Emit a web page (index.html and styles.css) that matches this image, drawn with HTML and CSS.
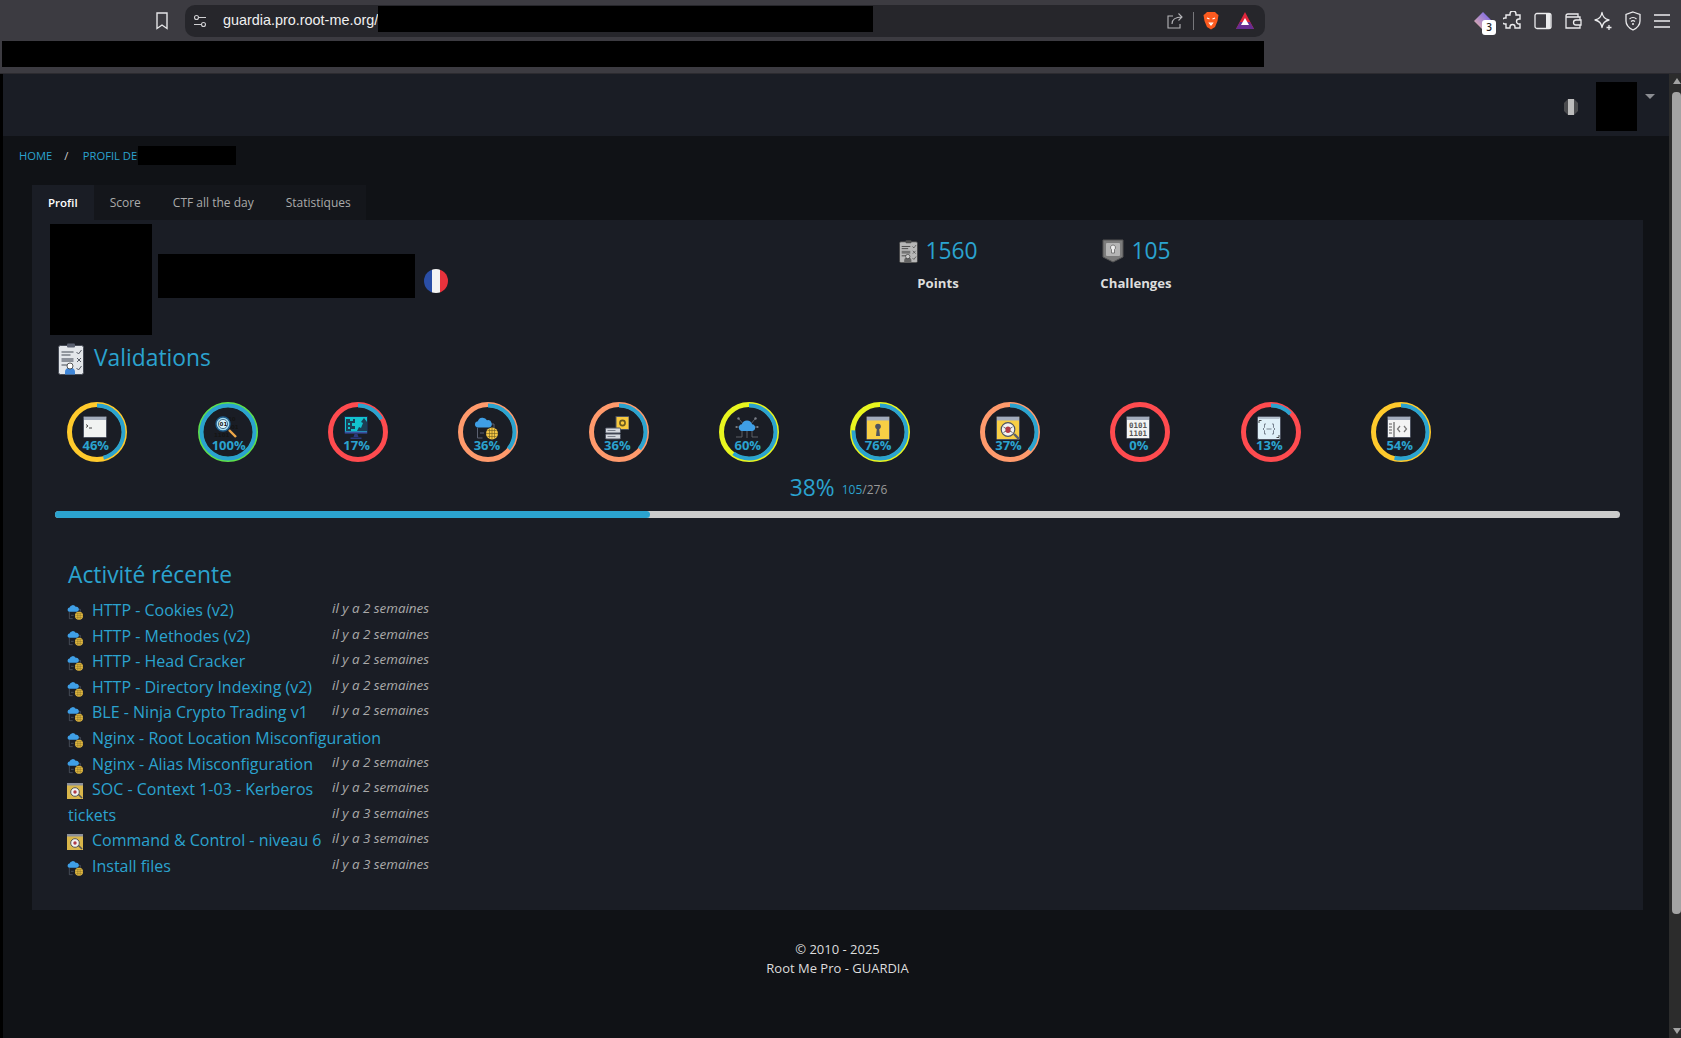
FILE: index.html
```html
<!DOCTYPE html>
<html lang="fr">
<head>
    <meta charset="UTF-8">
    <meta name="viewport" content="width=device-width, initial-scale=1.0">
    <title>Profil - Root Me Pro</title>
    <link rel="stylesheet" href="styles.css">
</head>
<body>
    <svg class="defs" width="0" height="0">
        <symbol id="i-terminal" viewBox="0 0 24 24">
            <rect x="0.500" y="0.500" width="23" height="21" rx="1" fill="#f1f3f2" stroke="#4d5360"/>
            <rect x="1" y="1" width="22" height="3" fill="#a3acbc"/>
            <path d="M3 8.500l2 1.500-2 1.500M6 12h3" fill="none" stroke="#333" stroke-width="0.900"/>
        </symbol>
        <symbol id="i-monitor" viewBox="0 0 24 24">
            <rect x="0.500" y="0.500" width="23" height="16.500" fill="#12c3cf" stroke="#1b2a4a"/>
            <path d="M2 3h4v2h3V3h2v4H8v3h3v3H7v2H2zM13 15l2-4 2 1 2-5-2-1 3-4 3 4v9z" fill="#1c3f55"/>
            <path d="M4 7h2v2H4zM4 11h2v2H4z" fill="#12c3cf"/>
            <rect x="1" y="15.500" width="22" height="2" fill="#3b4f9e"/>
            <path d="M10.500 18h3l1 3h-5zM6.500 21.500h11v1.500h-11z" fill="#2b3a80"/>
        </symbol>
        <symbol id="i-network" viewBox="0 0 24 24">
            <path d="M3.500 12v10h5M15 8h5v5M6 17h4" fill="none" stroke="#5a6070" stroke-width="1"/>
            <path d="M3 11.500a3.200 3.200 0 0 1 .8-6.200A5 5 0 0 1 13 4.300a3.600 3.600 0 0 1 2 7.200z" fill="#3f9fe6"/>
            <circle cx="18" cy="17.500" r="6" fill="#f3c544"/>
            <path d="M12 17.500h12M18 11.500v12M13.500 14.500h9M13.500 20.500h9M15.500 12.500v10M20.500 12.500v10" stroke="#6b5a20" stroke-width="0.600"/>
        </symbol>
        <symbol id="i-server" viewBox="0 0 24 24">
            <rect x="11" y="0.500" width="13" height="13" fill="#f8c93e" stroke="#4d5360"/>
            <circle cx="17.500" cy="7" r="2.600" fill="none" stroke="#6b5a20" stroke-width="1.600"/>
            <rect x="0.500" y="12" width="15" height="5" rx="1" fill="#d5d9df" stroke="#4d5360"/>
            <rect x="0.500" y="18" width="15" height="5" rx="1" fill="#d5d9df" stroke="#4d5360"/>
            <path d="M2.500 14.500h8M2.500 20.500h8" stroke="#7b818d"/>
        </symbol>
        <symbol id="i-cloud" viewBox="0 0 24 24">
            <path d="M4 3l5 6M20 3l-5 6M1 11h4M23 11h-4M1 21h6M23 21h-6M12 15v7M7 14v7M17 14v7" fill="none" stroke="#63666e" stroke-width="0.900"/>
            <circle cx="3.500" cy="2.500" r="1.200" fill="#7b7f88"/>
            <circle cx="20.500" cy="2.500" r="1.200" fill="#7b7f88"/>
            <circle cx="1.500" cy="11" r="1.100" fill="#7b7f88"/>
            <circle cx="22.500" cy="11" r="1.100" fill="#7b7f88"/>
            <path d="M6.500 15a3.400 3.400 0 0 1 .4-6.700 5.300 5.300 0 0 1 10.200 0 3.400 3.400 0 0 1 .4 6.700z" fill="#3f9fe6"/>
        </symbol>
        <symbol id="i-key" viewBox="0 0 24 24">
            <rect x="0.500" y="0.500" width="23" height="23" rx="1" fill="#f8cf45" stroke="#4d5360"/>
            <rect x="1" y="1" width="22" height="3.500" fill="#a3acbc"/>
            <circle cx="12" cy="10.500" r="2.800" fill="#4d5360"/>
            <path d="M11 11h2l1 9h-4z" fill="#4d5360"/>
        </symbol>
        <symbol id="i-bug" viewBox="0 0 24 24">
            <rect x="0.500" y="0.500" width="23" height="23" rx="1" fill="#f8cf45" stroke="#4d5360"/>
            <rect x="1" y="1" width="22" height="3.500" fill="#a3acbc"/>
            <path d="M18 18l5 5" stroke="#5a5f6a" stroke-width="2.400"/>
            <circle cx="12" cy="13.500" r="6.800" fill="#f2f2f2" stroke="#4d5360" stroke-width="1.200"/>
            <ellipse cx="12" cy="13.800" rx="2.600" ry="3.200" fill="#b23b46"/>
            <path d="M7.500 11l2.500 1.500M16.500 11L14 12.500M7.500 16.500l2.500-1.500M16.500 16.500L14 15" stroke="#333" stroke-width="0.700"/>
        </symbol>
        <symbol id="i-brace" viewBox="0 0 24 24">
            <rect x="0.500" y="0.500" width="23" height="23" rx="1.500" fill="#dff0f8" stroke="#4d5360"/>
            <path d="M1.500 2h21" stroke="#a3acbc" stroke-width="1.400"/>
            <path d="M9 8H7.500v3.500L6 13l1.500 1.500V18H9M15 8h1.500v3.500L18 13l-1.500 1.500V18H15M9.500 13h5" fill="none" stroke="#77828f" stroke-width="1"/>
            <path d="M2 7V4.500h2.500M22 19v2.500h-2.500" fill="none" stroke="#333" stroke-width="0.900"/>
        </symbol>
        <symbol id="i-code" viewBox="0 0 24 24">
            <rect x="0.500" y="0.500" width="23" height="21" rx="1" fill="#f3f4f4" stroke="#4d5360"/>
            <rect x="1" y="1" width="22" height="3" fill="#a3acbc"/>
            <path d="M7 6v15" stroke="#333" stroke-width="0.900"/>
            <path d="M2 8h3M2 11h3M2 14h3M2 17h3" stroke="#333" stroke-width="0.800"/>
            <path d="M13 10l-2.500 3 2.500 3M17 10l2.500 3-2.500 3" fill="none" stroke="#777" stroke-width="1.200"/>
        </symbol>
        <symbol id="i-soc" viewBox="0 0 16 16">
            <rect width="16" height="16" fill="#d9b64a"/>
            <rect width="16" height="2.500" fill="#8b8f98"/>
            <path d="M11 11l4 4" stroke="#555" stroke-width="1.600"/>
            <circle cx="8" cy="9" r="4.300" fill="#f2f2f2" stroke="#555"/>
            <circle cx="8" cy="9" r="1.700" fill="#b23b46"/>
        </symbol>
        <symbol id="i-clipboard" viewBox="0 0 26 32">
            <rect x="0.500" y="2.500" width="25" height="29" rx="2" fill="#e3e6ea" stroke="#454a55"/>
            <rect x="9" y="0.500" width="8" height="4" rx="1" fill="#5a6070"/>
            <path d="M3.500 9h12M3.500 12h9M3.500 22h6" stroke="#454a55" stroke-width="1.200"/>
            <rect x="3.500" y="15" width="12" height="4" fill="#8d929b"/>
            <path d="M18.500 9l2 2 3-4M19 15l4 4M23 15l-4 4M18.500 25l2 2 3-4" fill="none" stroke="#454a55" stroke-width="0.900"/>
            <path d="M7 31.500v-3a5 4 0 0 1 10 0v3z" fill="#3f86d8"/>
            <circle cx="12" cy="23" r="3" fill="#fff" stroke="#333" stroke-width="0.800"/>
        </symbol>
    </svg>

    <div class="browser">
        <div class="browser-top">
            <svg class="bookmark" width="14" height="18" viewBox="0 0 14 18"><path d="M2 1h10v15.500l-5-3.500-5 3.500z" fill="none" stroke="#e5e5e7" stroke-width="1.400"/></svg>
            <div class="urlbar">
                <svg class="tune" width="14" height="14" viewBox="0 0 14 14"><g fill="none" stroke="#cfcfd2" stroke-width="1.100"><circle cx="3.500" cy="3.500" r="2"/><path d="M6 3.500h7M1 10.500h7"/><circle cx="10.500" cy="10.500" r="2"/></g></svg>
                <span class="url">guardia.pro.root-me.org/</span>
                <div class="url-hidden"></div>
                <div class="url-actions">
                    <svg width="18" height="18" viewBox="0 0 18 18"><path d="M7 4H2v12h12v-4M6 12c0-4 3-7 10-7M12.500 1.500L16 5l-3.500 3.500" fill="none" stroke="#b5b5b9" stroke-width="1.100"/></svg>
                    <span class="url-sep"></span>
                    <svg width="16" height="19" viewBox="0 0 16 19"><path d="M4 1h8l2 2 1.500 1-1 6-2.500 6-4 2.500L4 16l-2.500-6-1-6L2 3z" fill="#fb5a1f"/><path d="M4 7l2.500 1M12 7L9.500 8M6.500 12h3L8 14z" fill="none" stroke="#fff" stroke-width="1.200"/></svg>
                    <svg class="bat" width="18" height="17" viewBox="0 0 18 17"><path d="M9 0l9 17H0z" fill="#e0263c"/><path d="M0 17l4-7h10l4 7z" fill="#662d91"/><path d="M9 6l4 7H5z" fill="#fff"/></svg>
                </div>
            </div>
            <div class="tools">
                <div class="gem">
                    <svg width="20" height="20" viewBox="0 0 20 20"><defs><linearGradient id="gemfill" x1="0" y1="1" x2="1" y2="0"><stop offset="0" stop-color="#f0b9a0"/><stop offset="1" stop-color="#6a5cf5"/></linearGradient></defs><path d="M10 1l9 9-9 9-9-9z" fill="url(#gemfill)"/></svg>
                    <span class="gem-count">3</span>
                </div>
                <svg width="20" height="20" viewBox="0 0 20 20"><path d="M7 3a3 3 0 0 1 6 0v1h4v4h-1a2.500 2.500 0 0 0 0 5h1v4h-5v-1a2.500 2.500 0 0 0-5 0v1H3v-4H2a3 3 0 0 1 0-6h1V4h4z" fill="none" stroke="#ececee" stroke-width="1.400"/></svg>
                <svg width="20" height="20" viewBox="0 0 20 20"><rect x="2" y="2.500" width="16" height="15" rx="2" fill="none" stroke="#ececee" stroke-width="1.300"/><rect x="13" y="3" width="4.500" height="14" fill="#ececee"/></svg>
                <svg width="20" height="20" viewBox="0 0 20 20"><path d="M3 6V5a2 2 0 0 1 2-2h10v3M3 6h14v11H3z" fill="none" stroke="#ececee" stroke-width="1.300"/><path d="M18 9h-5a2 2 0 0 0 0 5h5z" fill="#3d3c42" stroke="#ececee" stroke-width="1.300"/></svg>
                <svg width="20" height="20" viewBox="0 0 20 20"><path d="M9 1.500c.6 4.500 2.500 6.500 7 7.500-4.500 1-6.400 3-7 7.500-.6-4.500-2.500-6.500-7-7.500 4.500-1 6.400-3 7-7.500z" fill="none" stroke="#ececee" stroke-width="1.300" stroke-linejoin="round"/><path d="M16 14v5M13.500 16.500h5" stroke="#ececee" stroke-width="1.300"/></svg>
                <svg width="20" height="20" viewBox="0 0 20 20"><path d="M10 1l7 2.500V10c0 4-3 7-7 9-4-2-7-5-7-9V3.500z" fill="none" stroke="#ececee" stroke-width="1.300"/><path d="M6.500 8a5 5 0 0 1 7 0M8 10.500a3 3 0 0 1 4 0" fill="none" stroke="#ececee" stroke-width="1.100"/><circle cx="10" cy="13" r="1" fill="#ececee"/></svg>
                <svg width="18" height="20" viewBox="0 0 18 20"><path d="M1 4h16M1 10h16M1 16h16" stroke="#ececee" stroke-width="1.400"/></svg>
            </div>
        </div>
        <div class="bookmarks-hidden"></div>
    </div>

    <div class="window">
        <div class="edge"></div>
        <div class="page">
            <header class="topbar">
                <svg class="contrast" width="16" height="18" viewBox="0 0 16 18"><path d="M5 1h6l4 4v8l-4 4H5l-4-4V5z" fill="#4a4b4e"/><rect x="5" y="1" width="6" height="16" fill="#bdbdbd"/></svg>
                <div class="user-hidden"></div>
                <span class="caret"></span>
            </header>

            <nav class="crumbs">
                <a href="#">HOME</a>
                <span class="slash">/</span>
                <a href="#">PROFIL DE</a>
                <div class="crumb-hidden"></div>
            </nav>

            <ul class="tabs">
                <li class="active">Profil</li>
                <li>Score</li>
                <li>CTF all the day</li>
                <li>Statistiques</li>
            </ul>

            <main class="card">
                <section class="hero">
                    <div class="avatar-hidden"></div>
                    <div class="name-hidden"></div>
                    <svg class="flag" width="24" height="24" viewBox="0 0 24 24"><defs><clipPath id="flagclip"><circle cx="12" cy="12" r="12"/></clipPath></defs><g clip-path="url(#flagclip)"><rect width="8" height="24" fill="#2a4ea6"/><rect x="8" width="8" height="24" fill="#f4f4f4"/><rect x="16" width="8" height="24" fill="#e8323c"/></g></svg>
                    <div class="stat stat-points">
                        <div class="stat-num">
                            <svg class="gray" width="19" height="23" viewBox="0 0 26 32"><use href="#i-clipboard"/></svg>
                            <span>1560</span>
                        </div>
                        <strong>Points</strong>
                    </div>
                    <div class="stat stat-chall">
                        <div class="stat-num">
                            <svg width="22" height="24" viewBox="0 0 22 24"><path d="M1 1h20v17l-10 5-10-5z" fill="#7c7c7c" stroke="#555"/><rect x="4" y="4" width="14" height="13" rx="1" fill="#b5b5b5"/><path d="M11 6a2.500 2.500 0 0 1 1.500 4.500V14h-3v-3.500A2.500 2.500 0 0 1 11 6z" fill="#eee" stroke="#555" stroke-width="0.700"/></svg>
                            <span>105</span>
                        </div>
                        <strong>Challenges</strong>
                    </div>
                </section>

                <h2 class="valid-title">
                    <svg width="26" height="32" viewBox="0 0 26 32"><use href="#i-clipboard"/></svg>
                    <span>Validations</span>
                </h2>

                <div class="rings">
                    <div class="ring"><svg viewBox="0 0 60 60"><circle class="track yellow" cx="30" cy="30" r="27.500"/><circle class="arc" cx="30" cy="30" r="26.500" pathLength="100" stroke-dasharray="46 100" transform="rotate(-90 30 30)"/></svg><svg class="ring-icon" width="24" height="24"><use href="#i-terminal"/></svg><span class="ring-pct">46%</span></div>
                    <div class="ring"><svg viewBox="0 0 60 60"><circle class="track green" cx="30" cy="30" r="27.500"/><circle class="arc" cx="30" cy="30" r="26.500" pathLength="100" stroke-dasharray="100 100" transform="rotate(-90 30 30)"/></svg><svg class="ring-icon" width="24" height="24" viewBox="0 0 24 24"><text x="0" y="21" class="bin">1101</text><text x="17" y="13" class="bin">01</text><text x="14" y="5" class="bin">10</text><path d="M15 14l7 7" stroke="#f0a848" stroke-width="2.400"/><circle cx="9" cy="8" r="7" fill="#a9def2" stroke="#1e5d8c" stroke-width="1.400"/><circle cx="9" cy="8" r="4.600" fill="#d8f2fb" stroke="#16395a" stroke-width="0.700"/><text x="5.600" y="10" class="bin">01</text></svg><span class="ring-pct full">100%</span></div>
                    <div class="ring"><svg viewBox="0 0 60 60"><circle class="track red" cx="30" cy="30" r="27.500"/><circle class="arc" cx="30" cy="30" r="26.500" pathLength="100" stroke-dasharray="17 100" transform="rotate(-90 30 30)"/></svg><svg class="ring-icon" width="24" height="24"><use href="#i-monitor"/></svg><span class="ring-pct">17%</span></div>
                    <div class="ring"><svg viewBox="0 0 60 60"><circle class="track orange" cx="30" cy="30" r="27.500"/><circle class="arc" cx="30" cy="30" r="26.500" pathLength="100" stroke-dasharray="36 100" transform="rotate(-90 30 30)"/></svg><svg class="ring-icon" width="24" height="24"><use href="#i-network"/></svg><span class="ring-pct">36%</span></div>
                    <div class="ring"><svg viewBox="0 0 60 60"><circle class="track orange" cx="30" cy="30" r="27.500"/><circle class="arc" cx="30" cy="30" r="26.500" pathLength="100" stroke-dasharray="36 100" transform="rotate(-90 30 30)"/></svg><svg class="ring-icon" width="24" height="24"><use href="#i-server"/></svg><span class="ring-pct">36%</span></div>
                    <div class="ring"><svg viewBox="0 0 60 60"><circle class="track lime" cx="30" cy="30" r="27.500"/><circle class="arc" cx="30" cy="30" r="26.500" pathLength="100" stroke-dasharray="60 100" transform="rotate(-90 30 30)"/></svg><svg class="ring-icon" width="24" height="24"><use href="#i-cloud"/></svg><span class="ring-pct">60%</span></div>
                    <div class="ring"><svg viewBox="0 0 60 60"><circle class="track lime" cx="30" cy="30" r="27.500"/><circle class="arc" cx="30" cy="30" r="26.500" pathLength="100" stroke-dasharray="76 100" transform="rotate(-90 30 30)"/></svg><svg class="ring-icon" width="24" height="24"><use href="#i-key"/></svg><span class="ring-pct">76%</span></div>
                    <div class="ring"><svg viewBox="0 0 60 60"><circle class="track orange" cx="30" cy="30" r="27.500"/><circle class="arc" cx="30" cy="30" r="26.500" pathLength="100" stroke-dasharray="37 100" transform="rotate(-90 30 30)"/></svg><svg class="ring-icon" width="24" height="24"><use href="#i-bug"/></svg><span class="ring-pct">37%</span></div>
                    <div class="ring"><svg viewBox="0 0 60 60"><circle class="track red" cx="30" cy="30" r="27.500"/></svg><svg class="ring-icon" width="24" height="24" viewBox="0 0 24 24"><rect x="0.500" y="0.500" width="23" height="22" rx="1" fill="#f3f4f4" stroke="#4d5360"/><rect x="1" y="1" width="22" height="3" fill="#a3acbc"/><text x="3" y="12" class="bits">0101</text><text x="3" y="19.500" class="bits">1101</text></svg><span class="ring-pct">0%</span></div>
                    <div class="ring"><svg viewBox="0 0 60 60"><circle class="track red" cx="30" cy="30" r="27.500"/><circle class="arc" cx="30" cy="30" r="26.500" pathLength="100" stroke-dasharray="13 100" transform="rotate(-90 30 30)"/></svg><svg class="ring-icon" width="24" height="24"><use href="#i-brace"/></svg><span class="ring-pct">13%</span></div>
                    <div class="ring"><svg viewBox="0 0 60 60"><circle class="track yellow" cx="30" cy="30" r="27.500"/><circle class="arc" cx="30" cy="30" r="26.500" pathLength="100" stroke-dasharray="54 100" transform="rotate(-90 30 30)"/></svg><svg class="ring-icon" width="24" height="24"><use href="#i-code"/></svg><span class="ring-pct">54%</span></div>
                </div>

                <div class="total">
                    <span class="total-pct">38%</span>
                    <span class="total-count"><b>105</b>/276</span>
                </div>
                <div class="bar"><div class="bar-fill" style="width: 38%"></div></div>

                <section class="activity">
                    <h2>Activité récente</h2>
                    <div class="activity-row"><div class="activity-name"><svg class="mini"><use href="#i-network"/></svg><a href="#">HTTP - Cookies (v2)</a></div><em>il y a 2 semaines</em></div>
                    <div class="activity-row"><div class="activity-name"><svg class="mini"><use href="#i-network"/></svg><a href="#">HTTP - Methodes (v2)</a></div><em>il y a 2 semaines</em></div>
                    <div class="activity-row"><div class="activity-name"><svg class="mini"><use href="#i-network"/></svg><a href="#">HTTP - Head Cracker</a></div><em>il y a 2 semaines</em></div>
                    <div class="activity-row"><div class="activity-name"><svg class="mini"><use href="#i-network"/></svg><a href="#">HTTP - Directory Indexing (v2)</a></div><em>il y a 2 semaines</em></div>
                    <div class="activity-row"><div class="activity-name"><svg class="mini"><use href="#i-network"/></svg><a href="#">BLE - Ninja Crypto Trading v1</a></div><em>il y a 2 semaines</em></div>
                    <div class="activity-row"><div class="activity-name"><svg class="mini"><use href="#i-network"/></svg><a href="#">Nginx - Root Location Misconfiguration</a></div></div>
                    <div class="activity-row"><div class="activity-name"><svg class="mini"><use href="#i-network"/></svg><a href="#">Nginx - Alias Misconfiguration</a></div><em>il y a 2 semaines</em></div>
                    <div class="activity-row"><div class="activity-name"><svg class="mini"><use href="#i-soc"/></svg><a href="#">SOC - Context 1-03 - Kerberos</a></div><em>il y a 2 semaines</em></div>
                    <div class="activity-row"><div class="activity-name"><a href="#">tickets</a></div><em>il y a 3 semaines</em></div>
                    <div class="activity-row"><div class="activity-name"><svg class="mini"><use href="#i-soc"/></svg><a href="#">Command &amp; Control - niveau 6</a></div><em>il y a 3 semaines</em></div>
                    <div class="activity-row"><div class="activity-name"><svg class="mini"><use href="#i-network"/></svg><a href="#">Install files</a></div><em>il y a 3 semaines</em></div>
                </section>
            </main>

            <footer class="footer">
                <p>© 2010 - 2025</p>
                <p>Root Me Pro - GUARDIA</p>
            </footer>
        </div>
        <div class="scrollbar">
            <span class="arrow-up"></span>
            <div class="thumb"></div>
            <span class="arrow-down"></span>
        </div>
    </div>
</body>
</html>
```

FILE: styles.css
```css
* {
    box-sizing: border-box;
}

html, body {
    height: 100%;
}

body {
    margin: 0;
    display: flex;
    flex-direction: column;
    overflow: hidden;
    background-color: #101216;
    font-family: "Open Sans", sans-serif;
    color: #ddd;
}

a {
    color: #2ba3cf;
    text-decoration: none;
}

.defs {
    position: absolute;
}

.bin {
    font-family: "DejaVu Sans", sans-serif;
    font-size: 5.500px;
    font-weight: bold;
    fill: #151515;
}

.bits {
    font-family: "DejaVu Sans Mono", monospace;
    font-size: 7.500px;
    font-weight: bold;
    fill: #555;
}

/* browser chrome */
.browser {
    height: 74px;
    flex: none;
    background-color: #3c3b41;
    border-bottom: 1px solid #2c2b30;
}

.browser-top {
    display: flex;
    align-items: center;
    height: 38px;
    padding: 3px 0 0 155px;
}

.bookmark {
    flex: none;
    margin-right: 16px;
}

.urlbar {
    display: flex;
    align-items: center;
    width: 1080px;
    height: 32px;
    padding-left: 8px;
    border-radius: 10px;
    background-color: #26262b;
    flex: none;
}

.tune {
    margin-right: 16px;
}

.url {
    width: 155px;
    margin-top: -2px;
    font-family: "Liberation Sans", sans-serif;
    font-size: 14.400px;
    color: #f0f0f0;
    white-space: nowrap;
}

.url-hidden {
    align-self: flex-start;
    width: 495px;
    height: 26px;
    margin-top: 1px;
    background-color: #000;
}

.url-actions {
    display: flex;
    align-items: center;
    gap: 9px;
    margin-left: auto;
    padding-right: 11px;
}

.url-sep {
    width: 1px;
    height: 18px;
    background-color: #77777b;
}

.bat {
    margin-left: 8px;
}

.tools {
    display: flex;
    align-items: center;
    gap: 10px;
    margin-left: 208px;
}

.gem {
    position: relative;
    width: 20px;
    height: 20px;
}

.gem-count {
    position: absolute;
    left: 9px;
    top: 9px;
    width: 14px;
    height: 15px;
    border-radius: 3px;
    background-color: #fff;
    color: #222;
    font-size: 10px;
    font-weight: 600;
    line-height: 15px;
    text-align: center;
}

.bookmarks-hidden {
    width: 1262px;
    height: 26px;
    margin: 3px 0 0 2px;
    background-color: #000;
}

/* page */
.window {
    display: flex;
    flex: 1;
    min-height: 0;
}

.edge {
    width: 3px;
    flex: none;
    background-color: #000;
}

.page {
    flex: 1;
    min-width: 0;
}

.topbar {
    display: flex;
    align-items: flex-start;
    height: 62px;
    padding-top: 8px;
    padding-left: 1560px;
    background-color: #1a1d25;
}

.contrast {
    margin-top: 16px;
}

.user-hidden {
    width: 41px;
    height: 49px;
    margin-left: 17px;
    background-color: #000;
}

.caret {
    width: 0;
    height: 0;
    margin: 12px 0 0 8px;
    border-left: 5px solid transparent;
    border-right: 5px solid transparent;
    border-top: 5px solid #8b8d92;
}

.crumbs {
    display: flex;
    align-items: center;
    height: 40px;
    padding: 0 0 2px 16px;
    font-size: 11.200px;
}

.slash {
    margin: 0 14.500px 0 12px;
    color: #ccc;
}

.crumb-hidden {
    width: 98px;
    height: 19px;
    margin-left: 1px;
    background-color: #000;
}

.tabs {
    display: flex;
    width: 334px;
    height: 35px;
    margin: 9px 0 0 29px;
    padding: 0;
    list-style: none;
    background-color: #14161b;
}

.tabs li {
    padding: 0 16px;
    font-size: 12px;
    line-height: 35px;
    color: #aaa;
    white-space: nowrap;
}

.tabs li.active {
    background-color: #1a1d25;
    color: #fff;
    font-size: 11.500px;
    font-weight: 600;
}

.card {
    height: 690px;
    margin: 0 26px 0 29px;
    background-color: #1a1d25;
}

.hero {
    display: flex;
    align-items: flex-start;
    height: 115px;
    padding: 4px 0 0 18px;
}

.avatar-hidden {
    width: 102px;
    height: 111px;
    background-color: #000;
}

.name-hidden {
    width: 257px;
    height: 44px;
    margin: 30px 0 0 6px;
    background-color: #000;
}

.flag {
    margin: 45px 0 0 9px;
}

.stat {
    display: flex;
    flex-direction: column;
    align-items: center;
    width: 100px;
    margin-top: 11px;
}

.stat-points {
    margin-left: 440px;
}

.stat-chall {
    margin-left: 98px;
}

.stat-num {
    display: flex;
    align-items: center;
    gap: 7px;
    height: 30px;
    padding-left: 1px;
    font-size: 22.800px;
    color: #2ba3cf;
}

.stat-num svg {
    margin-top: 2px;
}

.stat strong {
    margin-top: 9px;
    font-size: 13.200px;
    font-weight: 700;
    color: #ddd;
}

.gray {
    filter: grayscale(1) brightness(0.8);
}

.valid-title {
    display: flex;
    align-items: flex-start;
    gap: 10px;
    height: 32px;
    margin: 8px 0 0 26px;
    font-size: 22.800px;
    font-weight: 400;
    line-height: 30px;
    color: #2ba3cf;
}

.rings {
    display: grid;
    grid-template-columns: repeat(12, 130.400px);
    margin-top: 27px;
}

.ring {
    position: relative;
    width: 60px;
    height: 60px;
    margin-left: 35.300px;
}

.ring > svg:first-child {
    display: block;
    width: 60px;
    height: 60px;
}

.track {
    fill: none;
    stroke-width: 5;
}

.yellow { stroke: #ffca2c; }
.green { stroke: #5fe04a; }
.red { stroke: #ff4b4f; }
.orange { stroke: #ff9a6c; }
.lime { stroke: #e8f51f; }

.arc {
    fill: none;
    stroke: #2ba3cf;
    stroke-width: 4;
}

.ring-icon {
    position: absolute;
    left: 16px;
    top: 14px;
}

.ring-pct {
    position: absolute;
    left: -3px;
    right: 0;
    top: 34px;
    font-size: 13px;
    font-weight: 700;
    line-height: 18px;
    text-align: center;
    color: #2ba3cf;
}

.ring-pct.full {
    left: 2px;
}

.total {
    display: flex;
    align-items: center;
    justify-content: center;
    gap: 7px;
    height: 32px;
    margin-top: 9px;
    padding-left: 2px;
    color: #2ba3cf;
}

.total-pct {
    font-size: 22.800px;
}

.total-count {
    margin-top: 5px;
    font-size: 12px;
    color: #999;
}

.total-count b {
    font-weight: 400;
    color: #2ba3cf;
}

.bar {
    height: 7px;
    margin: 8px 23px 0 23px;
    border-radius: 4px;
    background-color: #ccc;
}

.bar-fill {
    height: 100%;
    border-radius: 4px;
    background-color: #2ba3cf;
}

.activity {
    margin: 39px 0 0 36px;
    width: 365px;
}

.activity h2 {
    margin: 0 0 5px;
    font-size: 22.800px;
    font-weight: 400;
    line-height: 36px;
    color: #2ba3cf;
}

.activity-row {
    display: flex;
    height: 25.600px;
    font-size: 16px;
    line-height: 25.600px;
    white-space: nowrap;
}

.activity-name {
    width: 264px;
    flex: none;
}

.mini {
    width: 16px;
    height: 16px;
    margin: 0 9px 0 -1px;
    vertical-align: -4px;
}

.activity-row em {
    margin-top: -2px;
    font-size: 13.400px;
    color: #aaa;
}

.footer {
    margin-top: 30px;
    padding-left: 3px;
    text-align: center;
    font-size: 13px;
    line-height: 19px;
    color: #ddd;
}

.footer p {
    margin: 0;
}

/* scrollbar */
.scrollbar {
    display: flex;
    flex-direction: column;
    align-items: center;
    width: 12px;
    flex: none;
    padding-left: 3px;
    background-color: #2c2c2c;
}

.thumb {
    width: 9px;
    flex: none;
    height: 822px;
    margin-top: 8px;
    border-radius: 4px;
    background-color: #a3a3a3;
}

.arrow-up,
.arrow-down {
    width: 0;
    height: 0;
    border-left: 4px solid transparent;
    border-right: 4px solid transparent;
}

.arrow-up {
    margin-top: 4px;
    border-bottom: 6px solid #a3a3a3;
}

.arrow-down {
    margin-top: auto;
    margin-bottom: 4px;
    border-top: 6px solid #a3a3a3;
}
```
